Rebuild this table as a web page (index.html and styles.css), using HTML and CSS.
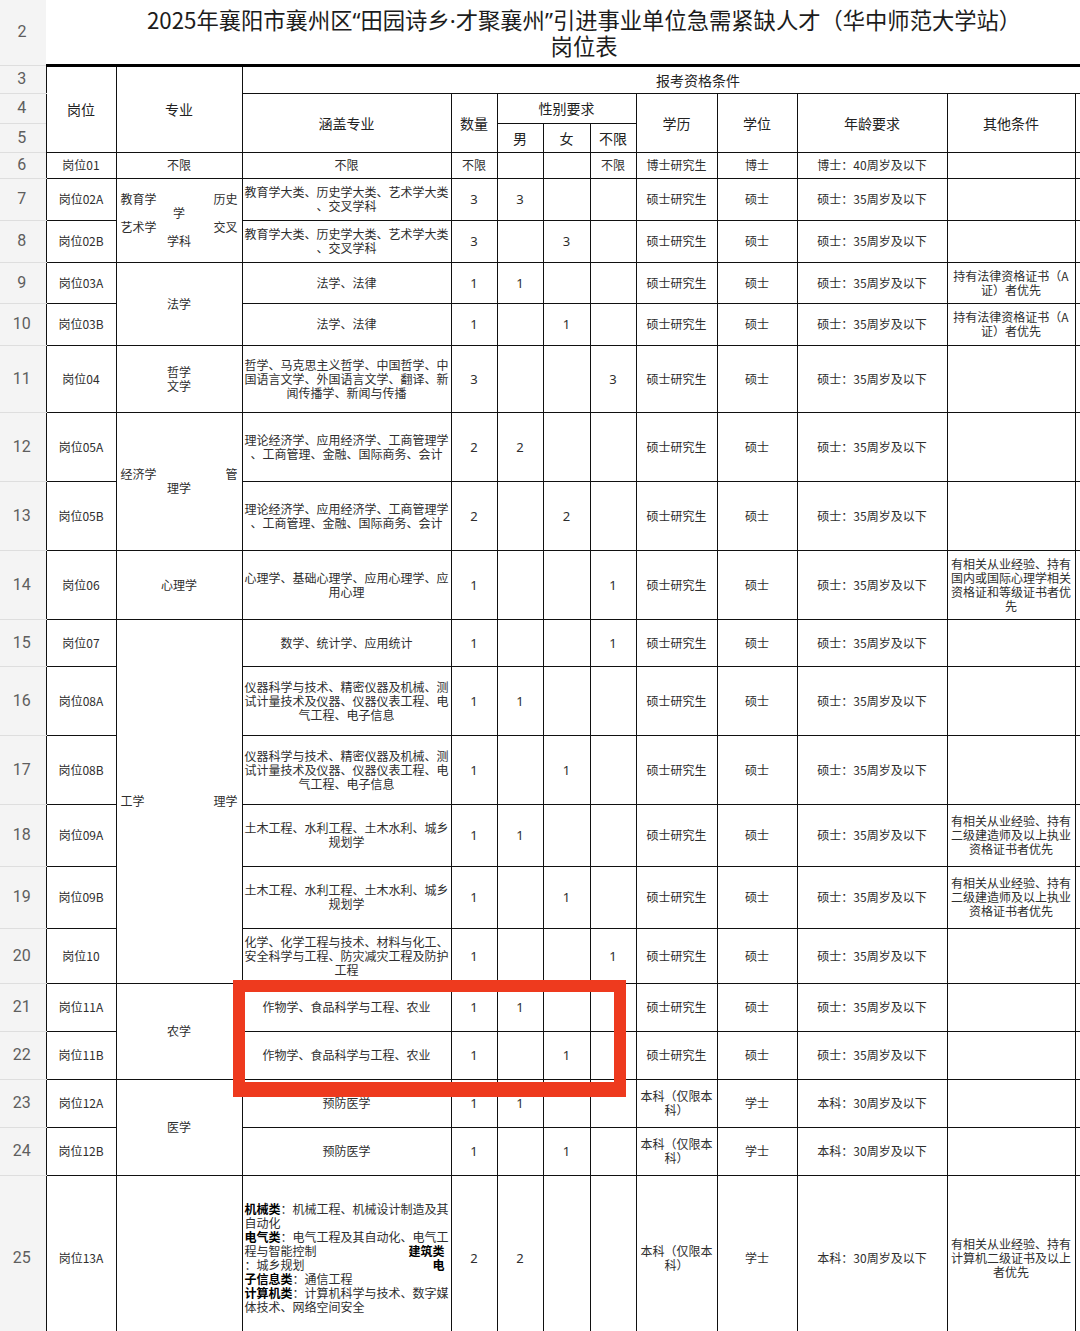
FILE: index.html
```html
<!DOCTYPE html>
<html lang="zh-CN">
<head>
<meta charset="utf-8">
<title>岗位表</title>
<link rel="stylesheet" href="styles.css">
</head>
<body>
<div class="sheet">
<table class="grid">
<colgroup>
<col class="w-rn"><col class="w-gw"><col class="w-zy"><col class="w-hg"><col class="w-sl"><col class="w-n"><col class="w-v"><col class="w-bx"><col class="w-xl"><col class="w-xw"><col class="w-nl"><col class="w-qt"><col class="w-ex">
</colgroup>
<tbody>
<tr class="h65"><td class="rn">2</td><td colspan="12" class="title"><div class="tl">2025年襄阳市襄州区<span class="pn">“</span>田园诗乡<span class="pn">·</span>才聚襄州<span class="pn">”</span>引进事业单位急需紧缺人才（华中师范大学站）</div><div class="tl">岗位表</div></td></tr>
<tr class="h28"><td class="rn">3</td><td rowspan="3" class="hd">岗位</td><td rowspan="3" class="hd">专业</td><td colspan="10" class="hd">报考资格条件</td></tr>
<tr class="h30"><td class="rn">4</td><td rowspan="2" class="hd">涵盖专业</td><td rowspan="2" class="hd">数量</td><td colspan="3" class="hd">性别要求</td><td rowspan="2" class="hd">学历</td><td rowspan="2" class="hd">学位</td><td rowspan="2" class="hd">年龄要求</td><td rowspan="2" class="hd">其他条件</td><td rowspan="2"></td></tr>
<tr class="h29"><td class="rn">5</td><td class="hd">男</td><td class="hd">女</td><td class="hd">不限</td></tr>
<tr class="h26"><td class="rn">6</td><td>岗位01</td><td>不限</td><td>不限</td><td>不限</td><td></td><td></td><td>不限</td><td>博士研究生</td><td>博士</td><td>博士：40周岁及以下</td><td></td><td></td></tr>
<tr class="h42"><td class="rn">7</td><td>岗位02A</td>
<td rowspan="2" class="zy"><div class="split"><span>教育学</span><span>历史</span></div><div>学</div><div class="split"><span>艺术学</span><span>交叉</span></div><div>学科</div></td>
<td>教育学大类、历史学大类、艺术学大类<br>、交叉学科</td><td class="num">3</td><td class="num">3</td><td></td><td></td><td>硕士研究生</td><td>硕士</td><td>硕士：35周岁及以下</td><td></td><td></td></tr>
<tr class="h42"><td class="rn">8</td><td>岗位02B</td><td>教育学大类、历史学大类、艺术学大类<br>、交叉学科</td><td class="num">3</td><td></td><td class="num">3</td><td></td><td>硕士研究生</td><td>硕士</td><td>硕士：35周岁及以下</td><td></td><td></td></tr>
<tr class="h41"><td class="rn">9</td><td>岗位03A</td><td rowspan="2">法学</td><td>法学、法律</td><td class="num">1</td><td class="num">1</td><td></td><td></td><td>硕士研究生</td><td>硕士</td><td>硕士：35周岁及以下</td><td>持有法律资格证书（A<br>证）者优先</td><td></td></tr>
<tr class="h42"><td class="rn">10</td><td>岗位03B</td><td>法学、法律</td><td class="num">1</td><td></td><td class="num">1</td><td></td><td>硕士研究生</td><td>硕士</td><td>硕士：35周岁及以下</td><td>持有法律资格证书（A<br>证）者优先</td><td></td></tr>
<tr class="h67"><td class="rn">11</td><td>岗位04</td><td>哲学<br>文学</td><td>哲学、马克思主义哲学、中国哲学、中<br>国语言文学、外国语言文学、翻译、新<br>闻传播学、新闻与传播</td><td class="num">3</td><td></td><td></td><td class="num">3</td><td>硕士研究生</td><td>硕士</td><td>硕士：35周岁及以下</td><td></td><td></td></tr>
<tr class="h69"><td class="rn">12</td><td>岗位05A</td>
<td rowspan="2" class="zy"><div class="split"><span>经济学</span><span>管</span></div><div>理学</div></td>
<td>理论经济学、应用经济学、工商管理学<br>、工商管理、金融、国际商务、会计</td><td class="num">2</td><td class="num">2</td><td></td><td></td><td>硕士研究生</td><td>硕士</td><td>硕士：35周岁及以下</td><td></td><td></td></tr>
<tr class="h69"><td class="rn">13</td><td>岗位05B</td><td>理论经济学、应用经济学、工商管理学<br>、工商管理、金融、国际商务、会计</td><td class="num">2</td><td></td><td class="num">2</td><td></td><td>硕士研究生</td><td>硕士</td><td>硕士：35周岁及以下</td><td></td><td></td></tr>
<tr class="h69"><td class="rn">14</td><td>岗位06</td><td>心理学</td><td>心理学、基础心理学、应用心理学、应<br>用心理</td><td class="num">1</td><td></td><td></td><td class="num">1</td><td>硕士研究生</td><td>硕士</td><td>硕士：35周岁及以下</td><td>有相关从业经验、持有<br>国内或国际心理学相关<br>资格证和等级证书者优<br>先</td><td></td></tr>
<tr class="h47"><td class="rn">15</td><td>岗位07</td>
<td rowspan="6" class="zy"><div class="split"><span>工学</span><span>理学</span></div></td>
<td>数学、统计学、应用统计</td><td class="num">1</td><td></td><td></td><td class="num">1</td><td>硕士研究生</td><td>硕士</td><td>硕士：35周岁及以下</td><td></td><td></td></tr>
<tr class="h69"><td class="rn">16</td><td>岗位08A</td><td>仪器科学与技术、精密仪器及机械、测<br>试计量技术及仪器、仪器仪表工程、电<br>气工程、电子信息</td><td class="num">1</td><td class="num">1</td><td></td><td></td><td>硕士研究生</td><td>硕士</td><td>硕士：35周岁及以下</td><td></td><td></td></tr>
<tr class="h69"><td class="rn">17</td><td>岗位08B</td><td>仪器科学与技术、精密仪器及机械、测<br>试计量技术及仪器、仪器仪表工程、电<br>气工程、电子信息</td><td class="num">1</td><td></td><td class="num">1</td><td></td><td>硕士研究生</td><td>硕士</td><td>硕士：35周岁及以下</td><td></td><td></td></tr>
<tr class="h62"><td class="rn">18</td><td>岗位09A</td><td>土木工程、水利工程、土木水利、城乡<br>规划学</td><td class="num">1</td><td class="num">1</td><td></td><td></td><td>硕士研究生</td><td>硕士</td><td>硕士：35周岁及以下</td><td>有相关从业经验、持有<br>二级建造师及以上执业<br>资格证书者优先</td><td></td></tr>
<tr class="h62"><td class="rn">19</td><td>岗位09B</td><td>土木工程、水利工程、土木水利、城乡<br>规划学</td><td class="num">1</td><td></td><td class="num">1</td><td></td><td>硕士研究生</td><td>硕士</td><td>硕士：35周岁及以下</td><td>有相关从业经验、持有<br>二级建造师及以上执业<br>资格证书者优先</td><td></td></tr>
<tr class="h55"><td class="rn">20</td><td>岗位10</td><td>化学、化学工程与技术、材料与化工、<br>安全科学与工程、防灾减灾工程及防护<br>工程</td><td class="num">1</td><td></td><td></td><td class="num">1</td><td>硕士研究生</td><td>硕士</td><td>硕士：35周岁及以下</td><td></td><td></td></tr>
<tr class="h48"><td class="rn">21</td><td>岗位11A</td><td rowspan="2">农学</td><td>作物学、食品科学与工程、农业</td><td class="num">1</td><td class="num">1</td><td></td><td></td><td>硕士研究生</td><td>硕士</td><td>硕士：35周岁及以下</td><td></td><td></td></tr>
<tr class="h48"><td class="rn">22</td><td>岗位11B</td><td>作物学、食品科学与工程、农业</td><td class="num">1</td><td></td><td class="num">1</td><td></td><td>硕士研究生</td><td>硕士</td><td>硕士：35周岁及以下</td><td></td><td></td></tr>
<tr class="h48"><td class="rn">23</td><td>岗位12A</td><td rowspan="2">医学</td><td>预防医学</td><td class="num">1</td><td class="num">1</td><td></td><td></td><td>本科（仅限本<br>科）</td><td>学士</td><td>本科：30周岁及以下</td><td></td><td></td></tr>
<tr class="h48"><td class="rn">24</td><td>岗位12B</td><td>预防医学</td><td class="num">1</td><td></td><td class="num">1</td><td></td><td>本科（仅限本<br>科）</td><td>学士</td><td>本科：30周岁及以下</td><td></td><td></td></tr>
<tr class="h166"><td class="rn">25</td><td>岗位13A</td><td></td>
<td class="rich"><div><b>机械类</b>：机械工程、机械设计制造及其</div><div>自动化</div><div><b>电气类</b>：电气工程及其自动化、电气工</div><div class="split pr"><span>程与智能控制</span><b>建筑类</b></div><div class="split pr"><span>：城乡规划</span><b>电</b></div><div><b>子信息类</b>：通信工程</div><div><b>计算机类</b>：计算机科学与技术、数字媒</div><div>体技术、网络空间安全</div></td>
<td class="num">2</td><td class="num">2</td><td></td><td></td><td>本科（仅限本<br>科）</td><td>学士</td><td>本科：30周岁及以下</td><td>有相关从业经验、持有<br>计算机二级证书及以上<br>者优先</td><td></td></tr>
</tbody>
</table>
<div class="mark"></div>
</div>
</body>
</html>
```

FILE: styles.css
```css
html, body {
  margin: 0;
  padding: 0;
  background: #ffffff;
  overflow: hidden;
}
body {
  font-family: "Noto Sans CJK SC", "Noto Sans", sans-serif;
  width: 1080px;
  height: 1331px;
}
.sheet {
  position: relative;
  width: 1154px;
}
.grid {
  border-collapse: collapse;
  table-layout: fixed;
  width: 1154px;
}
.w-rn { width: 46px; }
.w-gw { width: 70px; }
.w-zy { width: 126px; }
.w-hg { width: 209px; }
.w-sl { width: 46px; }
.w-n { width: 46px; }
.w-v { width: 47px; }
.w-bx { width: 46px; }
.w-xl { width: 81px; }
.w-xw { width: 80px; }
.w-nl { width: 150px; }
.w-qt { width: 128px; }
.w-ex { width: 79px; }

.grid td {
  border: 1px solid #111;
  padding: 0 2px;
  text-align: center;
  vertical-align: middle;
  font-size: 12px;
  line-height: 14px;
  color: #2e2e2e;
  white-space: nowrap;
  overflow: hidden;
}
.grid td.rn {
  border: none;
  border-bottom: 1px solid #dedede;
  background: #f4f4f4;
  color: #5e5e5e;
  font-family: Roboto, "Noto Sans", sans-serif;
  font-size: 16px;
  line-height: 18px;
  padding: 0 2px 0 0;
}
.grid td.title {
  border: none;
  border-bottom: 3px solid #000;
  font-size: 22.3px;
  color: #1c1c1c;
  padding: 0 32px 0 0;
}
.title .tl {
  height: 26px;
  line-height: 26px;
  overflow: visible;
}
.title .pn {
  font-family: "Noto Sans", "Liberation Sans", sans-serif;
}
.grid td.hd {
  font-size: 14px;
  line-height: 18px;
  color: #222;
}
.grid td.num {
  font-size: 13px;
  font-family: "Noto Sans", "Noto Sans CJK SC", sans-serif;
}
.grid td.zy {
  padding: 0 4px;
}
.split {
  display: flex;
  justify-content: space-between;
}
.split.pr {
  padding-right: 6px;
}
.grid td.rich {
  text-align: left;
  padding: 0 0 0 2px;
}
.rich b {
  font-weight: 700;
  color: #000;
}

.h65 { height: 65px; }
.h67 { height: 67px; }
.h28 { height: 28px; }
.h26 { height: 26px; }
.h30 { height: 30px; }
.h29 { height: 29px; }
.h42 { height: 42px; }
.h41 { height: 41px; }
.h69 { height: 69px; }
.h47 { height: 47px; }
.h62 { height: 62px; }
.h55 { height: 55px; }
.h48 { height: 48px; }
.h166 { height: 166px; }

.mark {
  position: absolute;
  left: 233px;
  top: 980px;
  width: 393px;
  height: 117px;
  box-sizing: border-box;
  border: 12px solid #ee3a1e;
  border-bottom-width: 15px;
}
```
